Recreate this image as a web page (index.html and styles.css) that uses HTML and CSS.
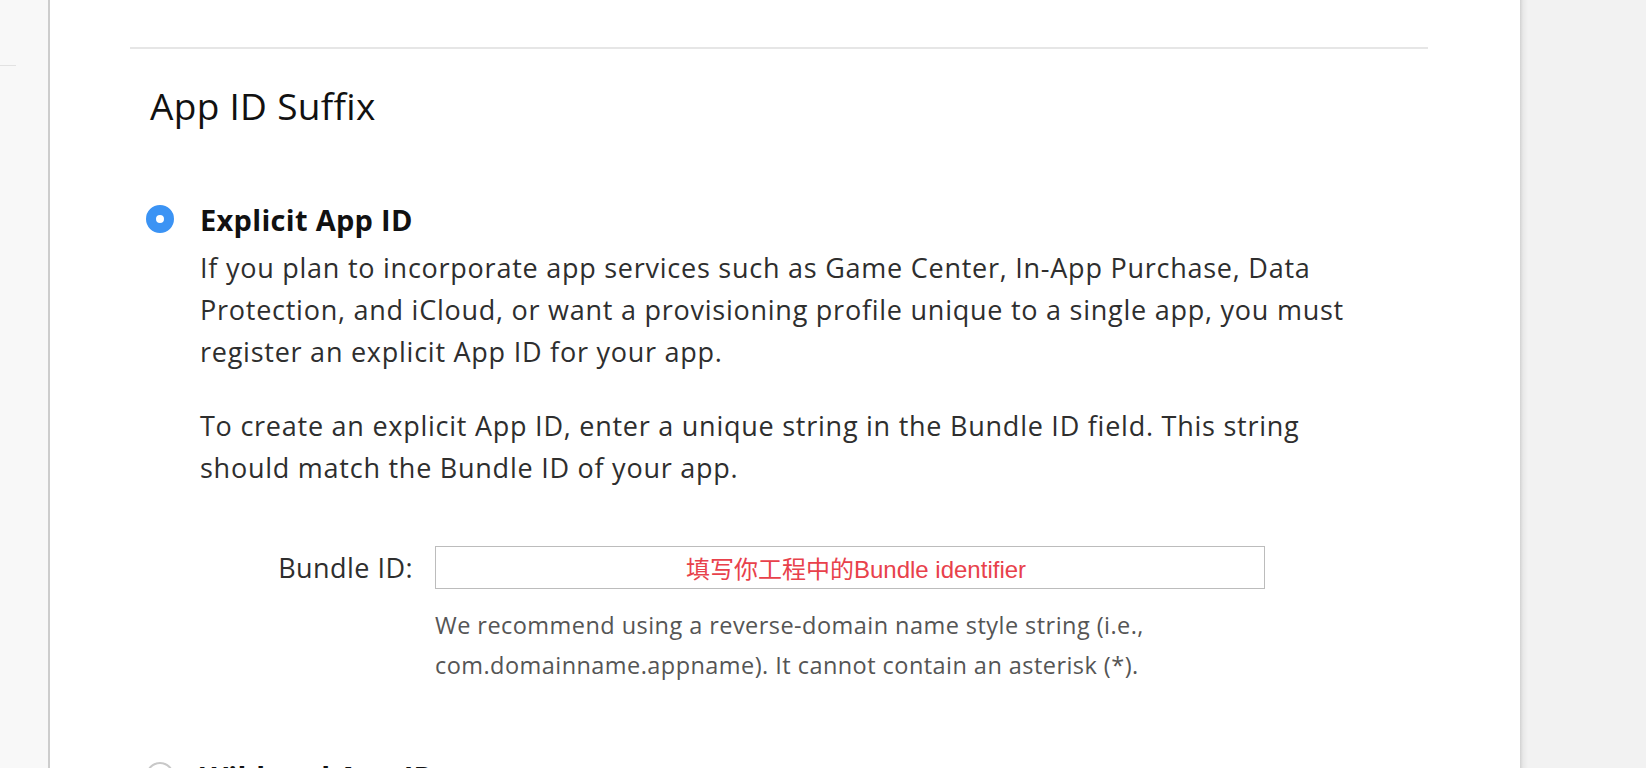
FILE: index.html
```html
<!DOCTYPE html>
<html lang="en">
<head>
<meta charset="utf-8">
<title>App ID Suffix</title>
<link rel="stylesheet" href="styles.css">
</head>
<body>
<div class="page">
  <aside class="left-rail"><div class="rail-line"></div></aside>
  <main class="main">
    <div class="divider"></div>
    <h2 class="heading">App ID Suffix</h2>

    <section class="option">
      <span class="radio radio-on"></span>
      <div class="option-body">
        <div class="option-title">Explicit App ID</div>
        <p class="para">If you plan to incorporate app services such as Game Center, In-App Purchase, Data Protection, and iCloud, or want a provisioning profile unique to a single app, you must register an explicit App ID for your app.</p>
        <p class="para para-2">To create an explicit App ID, enter a unique string in the Bundle ID field. This string should match the Bundle ID of your app.</p>
        <div class="field-row">
          <label class="field-label">Bundle ID:</label>
          <div class="field-col">
            <div class="input"><span class="placeholder">填写你工程中的Bundle identifier</span></div>
            <p class="hint">We recommend using a reverse-domain name style string (i.e., com.domainname.appname). It cannot contain an asterisk (*).</p>
          </div>
        </div>
      </div>
    </section>

    <section class="option option-2">
      <span class="radio radio-off"></span>
      <div class="option-body">
        <div class="option-title">Wildcard App ID</div>
      </div>
    </section>
  </main>
  <aside class="right-rail"></aside>
</div>
</body>
</html>
```

FILE: styles.css
```css
html, body {
  margin: 0;
  padding: 0;
  background: #ffffff;
}
body {
  width: 1646px;
  height: 768px;
  overflow: hidden;
  font-family: "Open Sans", "Noto Sans", sans-serif;
  color: #2e2e2e;
}
.page {
  display: flex;
  height: 768px;
}
.left-rail {
  width: 48px;
  flex: none;
  background: #f8f8f8;
  border-right: 2px solid #cdcdcd;
}
.rail-line {
  margin-top: 65px;
  width: 16px;
  height: 1px;
  background: #e2e2e2;
}
.main {
  width: 1390px;
  flex: none;
  padding-left: 80px;
  background: #ffffff;
}
.divider {
  margin-top: 47px;
  width: 1298px;
  height: 2px;
  background: #e6e6e6;
}
.heading {
  margin: 37px 0 0 20px;
  font-size: 37px;
  line-height: 40px;
  letter-spacing: 0.3px;
  font-weight: 400;
  color: #111111;
}
.option {
  display: flex;
  align-items: flex-start;
  margin-top: 76px;
  padding-left: 16px;
}
.option-2 {
  margin-top: 74px;
}
.radio {
  flex: none;
  width: 28px;
  height: 28px;
  box-sizing: border-box;
  border-radius: 50%;
  margin-top: 3px;
  margin-right: 26px;
  background: #ffffff;
}
.radio-on {
  border: 10px solid #3b93f4;
}
.radio-off {
  border: 2px solid #c8c8c8;
}
.option-body {
  width: 1180px;
}
.option-title {
  font-size: 29px;
  line-height: 36px;
  letter-spacing: 0.3px;
  font-weight: 700;
  color: #111111;
}
.para {
  margin: 9px 0 0 0;
  font-size: 27px;
  line-height: 42px;
  letter-spacing: 0.75px;
  color: #2e2e2e;
}
.para-2 {
  margin-top: 32px;
}
.field-row {
  display: flex;
  align-items: flex-start;
  margin-top: 57px;
}
.field-label {
  width: 213px;
  flex: none;
  text-align: right;
  margin-right: 22px;
  font-size: 27px;
  line-height: 43px;
  letter-spacing: 0.45px;
  color: #2e2e2e;
}
.field-col {
  width: 830px;
}
.input {
  height: 43px;
  box-sizing: border-box;
  border: 1px solid #bcbcbc;
  display: flex;
  align-items: center;
  justify-content: center;
}
.placeholder {
  font-family: "Liberation Sans", "Noto Sans CJK SC", sans-serif;
  font-size: 24px;
  color: #e8414b;
  padding-left: 12px;
}
.hint {
  margin: 16px 0 0 0;
  font-size: 23.5px;
  line-height: 40px;
  letter-spacing: 0.45px;
  color: #555555;
  width: 760px;
}
.right-rail {
  flex: 1;
  background: linear-gradient(to right, #d2d2d2 0, #e8e8e8 3px, #f2f2f2 8px, #f2f2f2 100%);
}
```
